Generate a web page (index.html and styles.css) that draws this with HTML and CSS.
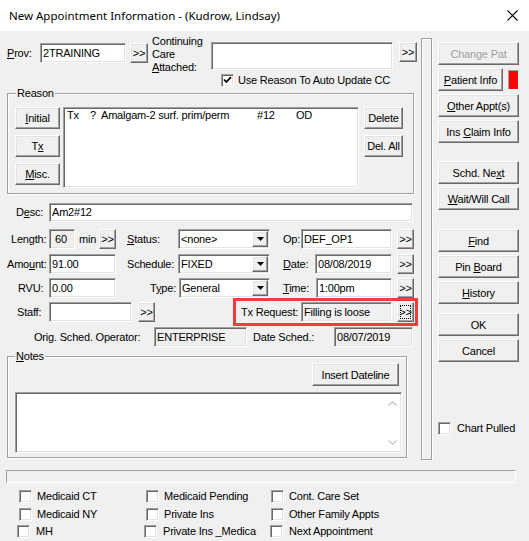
FILE: index.html
```html
<!DOCTYPE html>
<html>
<head>
<meta charset="utf-8">
<link rel="stylesheet" href="styles.css">
</head>
<body>
<div class="window">
  <div class="titlebar">
    <span class="title">New Appointment Information - (Kudrow, Lindsay)</span>
    <svg class="close" width="11" height="11" viewBox="0 0 11 11"><path d="M0.5 0.5L10.5 10.5M10.5 0.5L0.5 10.5" stroke="#000" stroke-width="1.1" fill="none"/></svg>
  </div>

  <div class="client">
    <div class="left">
      <div class="row r-prov">
        <span class="lbl w-prov"><u>P</u>rov:</span>
        <div class="edit e-prov">2TRAINING</div>
        <div class="btn sb b-prov"><span>&gt;&gt;</span></div>
        <div class="cc-label">Continuing<br>Care<br><u>A</u>ttached:</div>
        <div class="edit cc-box"></div>
        <div class="btn sb b-cc"><span>&gt;&gt;</span></div>
      </div>

      <div class="row r-use">
        <span class="chk"><svg width="11" height="11" viewBox="0 0 11 11"><path d="M2 4.5L4.3 7L9 2.2" stroke="#000" stroke-width="1.8" fill="none"/></svg></span>
        <span class="use-lbl">Use Reason To Auto Update CC</span>
      </div>

      <fieldset class="group reason">
        <legend>Reason</legend>
        <div class="reason-inner">
          <div class="bcol rcol">
            <div class="btn rbtn"><span><u>I</u>nitial</span></div>
            <div class="btn rbtn"><span>T<u>x</u></span></div>
            <div class="btn rbtn"><span><u>M</u>isc.</span></div>
          </div>
          <div class="edit listbox"><span class="c1">Tx</span><span class="c2">?</span><span class="c3">Amalgam-2 surf. prim/perm</span><span class="c4">#12</span><span>OD</span></div>
          <div class="bcol dcol">
            <div class="btn rbtn"><span>Delete</span></div>
            <div class="btn rbtn"><span>Del. All</span></div>
          </div>
        </div>
      </fieldset>

      <div class="row r-desc">
        <span class="lbl lc pl9">D<u>e</u>sc:</span>
        <div class="edit e-desc">Am2#12</div>
      </div>

      <div class="row r-len">
        <span class="lbl lc pl4">Length:</span>
        <div class="edit ro e-len">60</div>
        <span class="lbl l-min">min</span>
        <div class="btn sb"><span>&gt;&gt;</span></div>
        <span class="lbl l-mid"><u>S</u>tatus:</span>
        <div class="edit select s92"><span class="sel-text">&lt;none&gt;</span><span class="btn sel-btn"><svg width="7" height="4" viewBox="0 0 7 4"><path d="M0 0H7L3.5 4Z" fill="#000"/></svg></span></div>
        <span class="lbl l-op">Op:</span>
        <div class="edit e-op">DEF_OP1</div>
        <div class="btn sb ml5"><span>&gt;&gt;</span></div>
      </div>

      <div class="row r-amt">
        <span class="lbl lc">Amo<u>u</u>nt:</span>
        <div class="edit e-67">91.00</div>
        <span class="lbl l-mid">Schedule:</span>
        <div class="edit select s92"><span class="sel-text">FIXED</span><span class="btn sel-btn"><svg width="7" height="4" viewBox="0 0 7 4"><path d="M0 0H7L3.5 4Z" fill="#000"/></svg></span></div>
        <span class="lbl l-date"><u>D</u>ate:</span>
        <div class="edit e-date">08/08/2019</div>
        <div class="btn sb ml5"><span>&gt;&gt;</span></div>
      </div>

      <div class="row r-rvu">
        <span class="lbl lc pl11">RVU:</span>
        <div class="edit e-67">0.00</div>
        <span class="lbl l-type">T<u>y</u>pe:</span>
        <div class="edit select s91"><span class="sel-text">General</span><span class="btn sel-btn"><svg width="7" height="4" viewBox="0 0 7 4"><path d="M0 0H7L3.5 4Z" fill="#000"/></svg></span></div>
        <span class="lbl l-time"><u>T</u>ime:</span>
        <div class="edit e-time">1:00pm</div>
        <div class="btn sb ml5"><span>&gt;&gt;</span></div>
      </div>

      <div class="row r-staff">
        <span class="lbl lc pl10">Staff:</span>
        <div class="edit e-staff"></div>
        <div class="btn sb ml6"><span>&gt;&gt;</span></div>
        <div class="redbox">
          <span class="lbl l-txr">Tx Request:</span>
          <div class="edit ro e-txr">Filling is loose</div>
          <div class="btn sb ml5 focus"><span>&gt;&gt;</span></div>
        </div>
      </div>

      <div class="row r-orig">
        <span class="lbl l-orig">Orig. Sched. Operator:</span>
        <div class="edit ro e-ent">ENTERPRISE</div>
        <span class="lbl l-ds">Date Sched.:</span>
        <div class="edit ro e-ds">08/07/2019</div>
      </div>

      <fieldset class="group notes">
        <legend><u>N</u>otes</legend>
        <div class="notes-inner">
          <div class="btn insert"><span>Insert Dateline</span></div>
          <div class="edit notes-text">
            <div class="vscroll">
              <svg width="9" height="5" viewBox="0 0 9 5"><path d="M0.5 4.5L4.5 0.8L8.5 4.5" stroke="#c2c2c2" stroke-width="1.2" fill="none"/></svg>
              <svg width="9" height="5" viewBox="0 0 9 5"><path d="M0.5 0.5L4.5 4.2L8.5 0.5" stroke="#c2c2c2" stroke-width="1.2" fill="none"/></svg>
            </div>
          </div>
        </div>
      </fieldset>
    </div>

    <div class="divider"></div>

    <div class="side">
      <div class="sgroup">
        <div class="btn side-btn disabled"><span>Change Pat</span></div>
        <div class="pat-row">
          <div class="btn side-btn pat-btn"><span><u>P</u>atient Info</span></div>
          <div class="redflag"></div>
        </div>
        <div class="btn side-btn"><span><u>O</u>ther Appt(s)</span></div>
        <div class="btn side-btn"><span>Ins <u>C</u>laim Info</span></div>
      </div>
      <div class="sgroup g2">
        <div class="btn side-btn"><span>Schd. Ne<u>x</u>t</span></div>
        <div class="btn side-btn"><span><u>W</u>ait/Will Call</span></div>
      </div>
      <div class="sgroup g3">
        <div class="btn side-btn"><span><u>F</u>ind</span></div>
        <div class="btn side-btn"><span>Pin <u>B</u>oard</span></div>
        <div class="btn side-btn"><span><u>H</u>istory</span></div>
      </div>
      <div class="sgroup g4">
        <div class="btn side-btn"><span>OK</span></div>
        <div class="btn side-btn"><span>Cancel</span></div>
      </div>
      <div class="chart">
        <span class="chk"></span>
        <span>Chart Pulled</span>
      </div>
    </div>
  </div>

  <div class="statusbar"></div>

  <div class="checks">
    <div class="crow">
      <div class="citem i1"><span class="chk"></span><span>Medicaid CT</span></div>
      <div class="citem i2"><span class="chk"></span><span>Medicaid Pending</span></div>
      <div class="citem"><span class="chk"></span><span>Cont. Care Set</span></div>
    </div>
    <div class="crow cr2">
      <div class="citem i1"><span class="chk"></span><span>Medicaid NY</span></div>
      <div class="citem i2"><span class="chk"></span><span>Private Ins</span></div>
      <div class="citem"><span class="chk"></span><span>Other Family Appts</span></div>
    </div>
    <div class="crow cr3">
      <div class="citem i1"><span class="chk"></span><span>MH</span></div>
      <div class="citem i2b"><span class="chk"></span><span>Private Ins _Medica</span></div>
      <div class="citem"><span class="chk"></span><span>Next Appointment</span></div>
    </div>
  </div>
</div>
</body>
</html>
```

FILE: styles.css
```css
* { box-sizing: border-box; }
body { margin: 0; background: #f0f0f0; }

.window {
  width: 529px;
  height: 541px;
  background: #f0f0f0;
  font-family: "Liberation Sans", Arial, sans-serif;
  font-size: 11px;
  letter-spacing: -0.2px;
  color: #000;
  overflow: hidden;
}
u { text-decoration: underline; text-underline-offset: 1px; }

.titlebar {
  height: 31px;
  background: #fff;
  display: flex;
  align-items: center;
  justify-content: space-between;
  padding: 0 11px 0 9px;
}
.title { font-family: "Noto Sans", sans-serif; font-size: 11.5px; letter-spacing: 0; }

.client { display: flex; height: 434px; }
.left { width: 421px; padding-left: 7px; flex: none; }

.row { display: flex; align-items: flex-start; height: 20px; }
.lbl { line-height: 20px; white-space: nowrap; flex: none; }

.edit {
  flex: none;
  background: #fff;
  border: 1px solid;
  border-color: #a0a0a0 #fff #fff #a0a0a0;
  box-shadow: inset 1px 1px #696969, inset -1px -1px #e3e3e3;
  height: 20px;
  line-height: 18px;
  padding: 0 2px;
  white-space: nowrap;
  overflow: hidden;
}
.edit.ro { background: #f0f0f0; }

.btn {
  flex: none;
  background: #f0f0f0;
  border: 1px solid;
  border-color: #fff #696969 #696969 #fff;
  box-shadow: inset -1px -1px #a0a0a0, inset 1px 1px #e3e3e3;
  display: flex;
  align-items: center;
  justify-content: center;
  white-space: nowrap;
}
.sb { width: 17px; height: 20px; padding-bottom: 1px; }
.ml5 { margin-left: 5px; }
.ml6 { margin-left: 6px; }
.focus { outline: 1px dotted #000; outline-offset: -4px; }

.chk {
  flex: none;
  width: 13px;
  height: 13px;
  background: #fff;
  border: 1px solid;
  border-color: #a0a0a0 #fff #fff #a0a0a0;
  box-shadow: inset 1px 1px #696969, inset -1px -1px #e3e3e3;
  display: flex;
}

/* top rows */
.r-prov { margin-top: 4px; height: 38px; }
.w-prov { width: 33px; margin-top: 8px; }
.e-prov { width: 86px; margin-top: 8px; }
.b-prov { width: 18px; margin-left: 4px; margin-top: 8px; }
.cc-label { width: 59px; margin-left: 4px; line-height: 13px; flex: none; }
.cc-box { width: 182px; height: 28px; margin-top: 7px; }
.b-cc { width: 18px; margin-left: 6px; margin-top: 7px; }

.r-use { margin-top: 1px; height: 13px; padding-left: 214px; align-items: center; }
.use-lbl { margin-left: 4px; line-height: 13px; }

/* group boxes */
.group {
  margin: 0;
  padding: 0;
  min-width: 0;
  border: 1px solid #a0a0a0;
  box-shadow: inset 1px 1px #fff, 1px 1px #fff;
}
.group legend {
  padding: 0 1px;
  line-height: 13px;
  background: #f0f0f0;
}
.reason { width: 407px; }
.reason legend { margin-left: 8px; }
.reason-inner { display: flex; align-items: flex-start; height: 93px; padding: 7px 0 0 7px; }
.bcol { display: flex; flex-direction: column; gap: 6px; flex: none; }
.rcol { width: 45px; }
.dcol { width: 39px; margin-left: 5px; }
.rbtn { height: 22px; }
.listbox { width: 296px; height: 81px; margin-left: 3px; line-height: 13px; padding: 1px 3px; }
.listbox span { display: inline-block; }
.c1 { width: 23px; }
.c2 { width: 11px; }
.c3 { width: 156px; }
.c4 { width: 39px; }

/* field rows */
.lc { width: 42px; }
.pl4 { padding-left: 4px; }
.pl9 { padding-left: 9px; }
.pl10 { padding-left: 10px; }
.pl11 { padding-left: 11px; }

.r-desc { margin-top: 9px; height: 19px; }
.r-desc .lbl { line-height: 19px; }
.e-desc { width: 364px; height: 19px; line-height: 17px; }

.r-len { margin-top: 7px; }
.r-amt { margin-top: 5px; }
.r-rvu { margin-top: 4px; }
.r-staff { margin-top: 4px; }
.r-orig { margin-top: 5px; }

.e-len { width: 26px; padding-left: 5px; }
.l-min { width: 20px; margin-left: 4px; }
.l-mid { width: 51px; margin-left: 11px; }
.l-op { width: 18px; margin-left: 13px; }
.e-op { width: 91px; }
.e-67 { width: 67px; }
.l-date { width: 32px; margin-left: 13px; }
.e-date { width: 77px; }
.l-type { width: 52px; margin-left: 11px; text-align: right; padding-right: 3px; }
.l-time { width: 33px; margin-left: 13px; }
.e-time { width: 76px; }
.e-staff { width: 83px; }

.select { display: flex; align-items: stretch; padding: 1px 1px 1px 2px; }
.s92 { width: 92px; }
.s91 { width: 91px; }
.sel-text { flex: 1; line-height: 16px; }
.sel-btn { width: 16px; }

.redbox {
  flex: none;
  display: flex;
  align-items: center;
  margin: -4px 0 -4px 78px;
  height: 28px;
  border: 3px solid #ee3d3d;
  padding: 0 1px 0 5px;
}
.l-txr { width: 60px; }
.e-txr { width: 91px; }

.l-orig { width: 147px; padding-left: 27px; }
.e-ent { width: 93px; }
.l-ds { width: 81px; margin-left: 6px; }
.e-ds { width: 79px; }

.notes { width: 400px; margin-top: 3px; }
.notes legend { margin-left: 7px; }
.notes-inner { height: 94px; padding: 0 7px; display: flex; flex-direction: column; }
.insert { align-self: flex-end; width: 87px; height: 23px; }
.notes-text { margin-top: 6px; width: 387px; height: 61px; display: flex; justify-content: flex-end; padding: 0; }
.vscroll {
  width: 17px;
  display: flex;
  flex-direction: column;
  justify-content: space-between;
  align-items: center;
  padding: 8px 0 7px;
}

/* divider + side */
.divider {
  flex: none;
  width: 11px;
  height: 422px;
  margin-top: 7px;
  border: 1px solid #a0a0a0;
  box-shadow: inset 1px 1px #fff, 1px 1px #fff;
}
.side { margin-left: 6px; width: 81px; padding-top: 11px; display: flex; flex-direction: column; flex: none; }
.sgroup { display: flex; flex-direction: column; gap: 3px; }
.g2 { margin-top: 18px; }
.g3 { margin-top: 19px; }
.g4 { margin-top: 9px; }
.side-btn { height: 23px; width: 81px; }
.disabled { color: #a0a0a0; }
.pat-row { display: flex; align-items: flex-start; }
.pat-btn { width: 65px; }
.redflag {
  width: 11px;
  height: 20px;
  margin: 2px 0 0 5px;
  background: #ff0000;
  border: 1px solid;
  border-color: #a0a0a0 #fff #fff #a0a0a0;
}
.chart { margin-top: 60px; display: flex; align-items: center; gap: 6px; line-height: 13px; }

/* bottom */
.statusbar {
  margin: 5px 0 0 6px;
  width: 510px;
  height: 13px;
  border: 1px solid;
  border-color: #a0a0a0 #fff #fff #a0a0a0;
}
.checks { padding-top: 7px; }
.crow { display: flex; height: 13px; padding-left: 19px; }
.cr2 { margin-top: 5px; }
.cr3 { margin-top: 4px; padding-left: 17px; }
.citem { display: flex; align-items: center; gap: 5px; line-height: 13px; flex: none; white-space: nowrap; }
.cr3 .citem { gap: 6px; }
.i1 { width: 127px; }
.i2 { width: 125px; }
.i2b { width: 126px; }
```
